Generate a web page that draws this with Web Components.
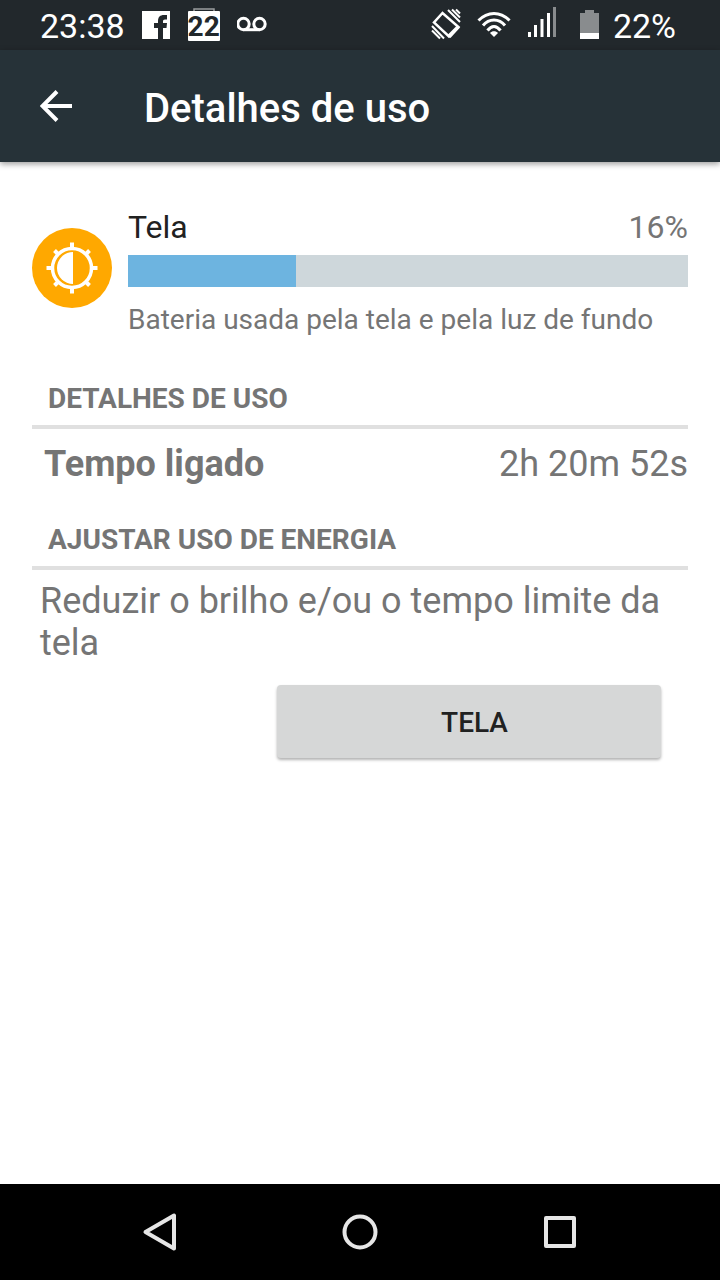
<!DOCTYPE html>
<html lang="pt-BR">
<head>
<meta charset="utf-8">
<meta name="viewport" content="width=device-width, initial-scale=1">
<title>Detalhes de uso</title>
<style>
  body { margin: 0; background: #fff; font-family: Roboto, "Noto Sans", sans-serif; color: #757575; }
</style>
</head>
<body>
<usage-screen></usage-screen>
<script>
const define = (name, html, setup) => {
  const template = document.createElement('template');
  template.innerHTML = html;
  customElements.define(name, class extends HTMLElement {
    constructor() {
      super();
      this.attachShadow({ mode: 'open' }).append(template.content.cloneNode(true));
    }
    connectedCallback() { if (setup) setup(this, this.shadowRoot); }
  });
};

define('status-bar', `
<style>
  :host { display: flex; justify-content: space-between; box-sizing: border-box; height: 50px; padding: 2px 44px 0 40px; background: #22282c; color: #fff; font-size: 34px; line-height: 48px; }
  .group { display: flex; align-items: center; }
  .left { gap: 16px; }
  .right { gap: 14px; }
  svg { display: block; height: 48px; }
  .day { position: relative; width: 34px; height: 48px; }
  .day span { position: absolute; inset: 0; text-align: center; font-size: 28px; line-height: 50px; font-weight: 700; color: #22282c; }
</style>
<div class="group left">
  <span>23:38</span>
  <svg width="30" viewBox="0 2 30 48" aria-label="Facebook"><path fill="#fff" d="M1 11h28v28H1z"/><path fill="#22282c" d="M17 39V28h-4v-5h4v-2c0-4 2-6 6-6h3v4.500h-2c-1.500 0-2 .700-2 2V23h4l-.500 5H22v11z"/></svg>
  <div class="day">
    <svg width="34" viewBox="0 2 34 48" aria-hidden="true"><path d="M7 11V9h20v2" fill="none" stroke="#9a9d9f" stroke-width="1.500"/><rect x="1" y="11" width="32" height="30" rx="1" fill="#fff"/></svg>
    <span>22</span>
  </div>
  <svg width="32" viewBox="1 2 32 48" aria-label="Correio de voz"><g fill="none" stroke="#fff" stroke-width="3"><circle cx="7.500" cy="24" r="5.700"/><circle cx="23.500" cy="24" r="5.700"/><path d="M7.500 29.700h16"/></g></svg>
</div>
<div class="group right">
  <svg width="32" viewBox="431 2 32 48" aria-label="Vibrar"><g fill="none" stroke="#fff"><path stroke-width="2.500" d="M442.500 13L434 22.500 449 36.500 458.500 27z"/><path stroke-width="2" d="M448 10l12 12M452 9.500l8 8M432 26l12 12.500M432 30.500l8 8M456 9.500l4 4"/></g><path fill="#fff" d="M447 35.500L456.500 26l3.500 1.500-9.500 10.500z"/></svg>
  <svg width="34" viewBox="-1 2 34 48" aria-label="Wi-Fi"><g fill="none" stroke="#fff" stroke-width="3"><path d="M.500 20.500C9.500 11 22.500 11 31.500 20.500"/><path d="M5 25.500C11 18 21 18 27 25.500"/><path d="M9.500 30.500C13.500 25 18.500 25 22.500 30.500"/></g><path fill="#fff" d="M12 33c2-2.500 6-2.500 8 0l-4 4z"/></svg>
  <svg width="40" viewBox="525 2 40 48" aria-label="Sinal"><path fill="#fff" d="M528 32h3v5h-3zM534 25h3v12h-3zM540.500 19h3v18h-3zM547 13h3v24h-3z"/><path fill="#898c8e" d="M553 7h3v30h-3z"/></svg>
  <svg width="20" viewBox="579 2 20 48" aria-label="Bateria"><path fill="#898c8e" d="M580 13h5v-3h9v3h5v20h-19z"/><path fill="#fff" d="M580 33h19v6h-19z"/></svg>
  <span>22%</span>
</div>`);

define('app-bar', `
<style>
  :host { display: flex; align-items: center; gap: 72px; box-sizing: border-box; height: 112px; padding: 0 40px; background: #263238; color: #fff; box-shadow: 0 2px 6px rgba(0,0,0,.4); position: relative; }
  button { display: block; padding: 0; border: 0; background: none; color: inherit; }
  svg { display: block; }
  h1 { margin: 0; padding-top: 6px; font-size: 40px; line-height: 48px; font-weight: 500; }
</style>
<button aria-label="Voltar"><svg width="32" height="32" viewBox="0 0 32 32"><path d="M32 16H3M17 1.500L2.500 16 17 30.500" fill="none" stroke="currentColor" stroke-width="4"/></svg></button>
<h1><slot></slot></h1>`);

define('usage-summary', `
<style>
  :host { display: flex; gap: 16px; }
  svg { flex: none; display: block; margin-top: 20px; }
  .body { flex: 1; min-width: 0; }
  .head { display: flex; justify-content: space-between; font-size: 32px; line-height: 38px; }
  label { color: #212121; }
  progress { appearance: none; display: block; width: 100%; height: 32px; margin: 9px 0 16px; border: 0; background: #ced7db; }
  progress::-webkit-progress-bar { background: #ced7db; }
  progress::-webkit-progress-value { background: #6db4e0; }
  p { margin: 0; font-size: 28px; line-height: 34px; }
</style>
<svg width="80" height="80" viewBox="0 0 80 80" aria-hidden="true">
  <circle cx="40" cy="40" r="40" fill="#ffa800"/>
  <g fill="none" stroke="#fff">
    <circle cx="40" cy="40" r="19.500" stroke-width="3.500"/>
    <path stroke-width="4" d="M40 14.500v6M40 59.500v6M14.500 40h6M59.500 40h6"/>
    <path stroke-width="4" d="M22.500 22.500l4 4M53.500 53.500l4 4M22.500 57.500l4-4M53.500 26.500l4-4"/>
  </g>
  <path fill="#fff" d="M41 24a16 16 0 0 0 0 32z"/>
</svg>
<div class="body">
  <div class="head"><label for="level"><slot name="name"></slot></label><slot name="share"></slot></div>
  <progress id="level" max="100"></progress>
  <p><slot></slot></p>
</div>`, (el, root) => { root.querySelector('progress').value = Number(el.getAttribute('level')); });

define('section-title', `
<style>
  :host { display: block; }
  h2 { margin: 0; padding: 0 16px 9px; border-bottom: 4px solid #e0e0e0; font-size: 28px; line-height: 34px; font-weight: 700; }
</style>
<h2><slot></slot></h2>`);

define('detail-row', `
<style>
  :host { display: flex; justify-content: space-between; padding: 14px 0 0 12px; font-size: 36px; line-height: 42px; }
  .label { font-weight: 700; }
</style>
<span class="label"><slot name="label"></slot></span><span><slot></slot></span>`);

define('action-button', `
<style>
  :host { display: block; }
  button { display: block; width: 100%; height: 73px; padding: 2px 0 0 11px; border: 0; border-radius: 4px; background: #d6d7d7; box-shadow: 0 2px 3px rgba(0,0,0,.3); color: #212121; font: 500 28px/34px Roboto, "Noto Sans", sans-serif; }
</style>
<button><slot></slot></button>`);

define('nav-bar', `
<style>
  :host { display: flex; box-sizing: border-box; height: 96px; padding: 0 8.333%; background: #000; color: #e6e6e6; }
  button { flex: 1; display: flex; align-items: center; justify-content: center; padding: 0; border: 0; background: none; color: inherit; }
  svg { display: block; fill: none; stroke: currentColor; stroke-width: 4; stroke-linejoin: round; }
</style>
<button aria-label="Voltar"><svg width="40" height="40" viewBox="0 0 40 40"><path d="M34 3.500v33L5.500 20z"/></svg></button>
<button aria-label="Início"><svg width="40" height="40" viewBox="0 0 40 40"><circle cx="20" cy="20" r="15.500"/></svg></button>
<button aria-label="Recentes"><svg width="40" height="40" viewBox="0 0 40 40"><path d="M6 6h28v28H6z"/></svg></button>`);

define('usage-screen', `
<style>
  :host { display: flex; flex-direction: column; min-height: 100vh; }
  main { flex: 1; padding: 46px 32px; }
  .usage { margin-top: 45px; }
  .adjust { margin-top: 38px; }
  p { margin: 0; padding: 10px 8px 0; font-size: 36px; line-height: 42px; }
  action-button { width: 384px; max-width: 100%; margin: 21px 27px 0 auto; }
</style>
<status-bar></status-bar>
<app-bar>Detalhes de uso</app-bar>
<main>
  <usage-summary level="30"><span slot="name">Tela</span><span slot="share">16%</span>Bateria usada pela tela e pela luz de fundo</usage-summary>
  <section-title class="usage">DETALHES DE USO</section-title>
  <detail-row><span slot="label">Tempo ligado</span>2h 20m 52s</detail-row>
  <section-title class="adjust">AJUSTAR USO DE ENERGIA</section-title>
  <p>Reduzir o brilho e/ou o tempo limite da tela</p>
  <action-button>TELA</action-button>
</main>
<nav-bar></nav-bar>`);
</script>
</body>
</html>
